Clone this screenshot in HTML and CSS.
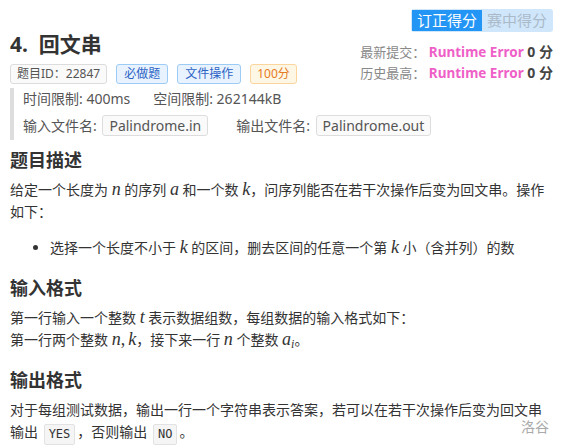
FILE: index.html
```html
<!DOCTYPE html>
<html lang="zh-CN">

<head>
    <meta charset="UTF-8">
    <meta name="viewport" content="width=device-width, initial-scale=1.0">
    <title>回文串</title>
    <link rel="stylesheet" href="styles.css">
</head>

<body>
    <div class="page">
        <div class="header">
            <div class="header-left">
                <h1 class="title">4.&nbsp; 回文串</h1>
                <div class="tags">
                    <span class="tag tag-gray">题目ID：22847</span>
                    <span class="tag tag-blue">必做题</span>
                    <span class="tag tag-blue">文件操作</span>
                    <span class="tag tag-orange">100分</span>
                </div>
            </div>
            <div class="header-right">
                <div class="score-switch">
                    <span class="switch-item active">订正得分</span>
                    <span class="switch-item">赛中得分</span>
                </div>
                <div class="status">
                    <div class="status-row">
                        <span class="status-label">最新提交：</span>
                        <span class="status-re">Runtime Error</span>
                        <span class="status-score">0 分</span>
                    </div>
                    <div class="status-row">
                        <span class="status-label">历史最高：</span>
                        <span class="status-re">Runtime Error</span>
                        <span class="status-score">0 分</span>
                    </div>
                </div>
            </div>
        </div>

        <!-- 限制信息 -->
        <div class="limits">
            <div class="limit-row row-1">
                <span>时间限制: 400ms</span>
                <span>空间限制: 262144kB</span>
            </div>
            <div class="limit-row row-2">
                <span>输入文件名: <span class="file-box">Palindrome.in</span></span>
                <span>输出文件名: <span class="file-box">Palindrome.out</span></span>
            </div>
        </div>

        <h2 class="first">题目描述</h2>
        <p>给定一个长度为 <i class="math">n</i> 的序列 <i class="math">a</i> 和一个数 <i class="math">k</i>，问序列能否在若干次操作后变为回文串。操作如下：</p>
        <ul>
            <li>选择一个长度不小于 <i class="math">k</i> 的区间，删去区间的任意一个第 <i class="math">k</i> 小（含并列）的数</li>
        </ul>

        <h2>输入格式</h2>
        <p>第一行输入一个整数 <i class="math">t</i> 表示数据组数，每组数据的输入格式如下：<br>
            第一行两个整数 <i class="math">n</i><span class="math-up">,</span><i class="math">k</i>，接下来一行 <i class="math">n</i> 个整数 <i class="math">a<sub>i</sub></i>。</p>

        <h2>输出格式</h2>
        <p>对于每组测试数据，输出一行一个字符串表示答案，若可以在若干次操作后变为回文串输出 <code>YES</code>，否则输出 <code>NO</code>。</p>
    </div>

    <div class="watermark">洛谷</div>
</body>

</html>
```

FILE: styles.css
```css
body {
    margin: 0;
    font-family: 'Noto Sans', 'Noto Sans CJK SC', sans-serif;
    background-color: #fff;
    color: #333;
    font-size: 14px;
}

.page {
    padding: 9px 11px 0 10px;
}

.header {
    display: flex;
    justify-content: space-between;
    align-items: flex-start;
}

.header-left {
    padding-top: 21px;
}

.title {
    margin: 0;
    font-size: 21px;
    line-height: 28px;
    font-weight: bold;
    color: #333;
}

.tags {
    display: flex;
    gap: 9px;
    margin-top: 6px;
}

.tag {
    display: inline-block;
    height: 20px;
    line-height: 18px;
    padding: 0 6px;
    font-size: 12px;
    border: 1px solid;
    border-radius: 3px;
    box-sizing: border-box;
}

.tag-gray {
    background: #fafafa;
    border-color: #dcdcdc;
    color: #555;
}

.tag-blue {
    background: #e8f3ff;
    border-color: #9ccbf5;
    color: #2b63c4;
    padding: 0 7px;
}

.tag-orange {
    background: #fff7e6;
    border-color: #fbd59b;
    color: #e57a22;
}

.header-right {
    display: flex;
    flex-direction: column;
    align-items: flex-end;
}

.score-switch {
    display: flex;
    background: #cfe6fb;
    border-radius: 3px;
    padding: 1px;
    height: 23px;
    box-sizing: border-box;
}

.switch-item {
    padding: 0 5px;
    font-size: 15px;
    line-height: 21px;
    color: #abbac9;
}

.switch-item.active {
    background: #2395f5;
    color: #fff;
}

.status {
    margin-top: 9px;
    text-align: right;
}

.status-row {
    height: 21px;
    line-height: 21px;
    overflow: hidden;
}

.status-label {
    color: #888;
    font-size: 13px;
}

.status-re {
    color: #ef5fc8;
    font-weight: bold;
    font-size: 13.5px;
}

.status-score {
    font-weight: bold;
    color: #444;
    font-size: 14px;
}

/* 限制信息 */
.limits {
    margin-top: 4px;
    border-left: 4px solid #ddd;
    padding-left: 9px;
    color: #555;
    height: 52px;
}

.limit-row {
    display: flex;
}

.row-1 {
    gap: 23px;
    line-height: 22px;
}

.row-2 {
    gap: 28px;
    line-height: 28px;
    margin-top: 2px;
}

.file-box {
    display: inline-block;
    background: #fafafa;
    border: 1px solid #ddd;
    border-radius: 3px;
    padding: 0 6px;
    line-height: 19px;
    margin-left: 2px;
}

h2 {
    font-size: 18px;
    line-height: 24px;
    margin: 17px 0 7px;
    font-weight: bold;
}

h2.first {
    margin-top: 8px;
}

p {
    margin: 0;
    line-height: 22px;
}

ul {
    margin: 14px 0 0;
    padding-left: 40px;
    line-height: 22px;
}

.math {
    font-family: 'Liberation Serif', 'DejaVu Serif', serif;
    font-size: 18px;
    line-height: 0;
}

.math sub {
    font-size: 12px;
    line-height: 0;
    vertical-align: -3px;
}

.math-up {
    font-family: 'Liberation Serif', serif;
    font-size: 18px;
    line-height: 0;
    margin-right: 3px;
}

code {
    display: inline-block;
    font-family: 'DejaVu Sans Mono', 'Liberation Mono', monospace;
    font-size: 12px;
    line-height: 19px;
    background: #f5f5f5;
    border: 1px solid #e2e2e2;
    border-radius: 2px;
    padding: 0 4px;
    margin: 0 2px;
    vertical-align: -1px;
}

.watermark {
    position: absolute;
    right: 15px;
    top: 416px;
    color: #aaa;
    font-size: 14px;
}
```
